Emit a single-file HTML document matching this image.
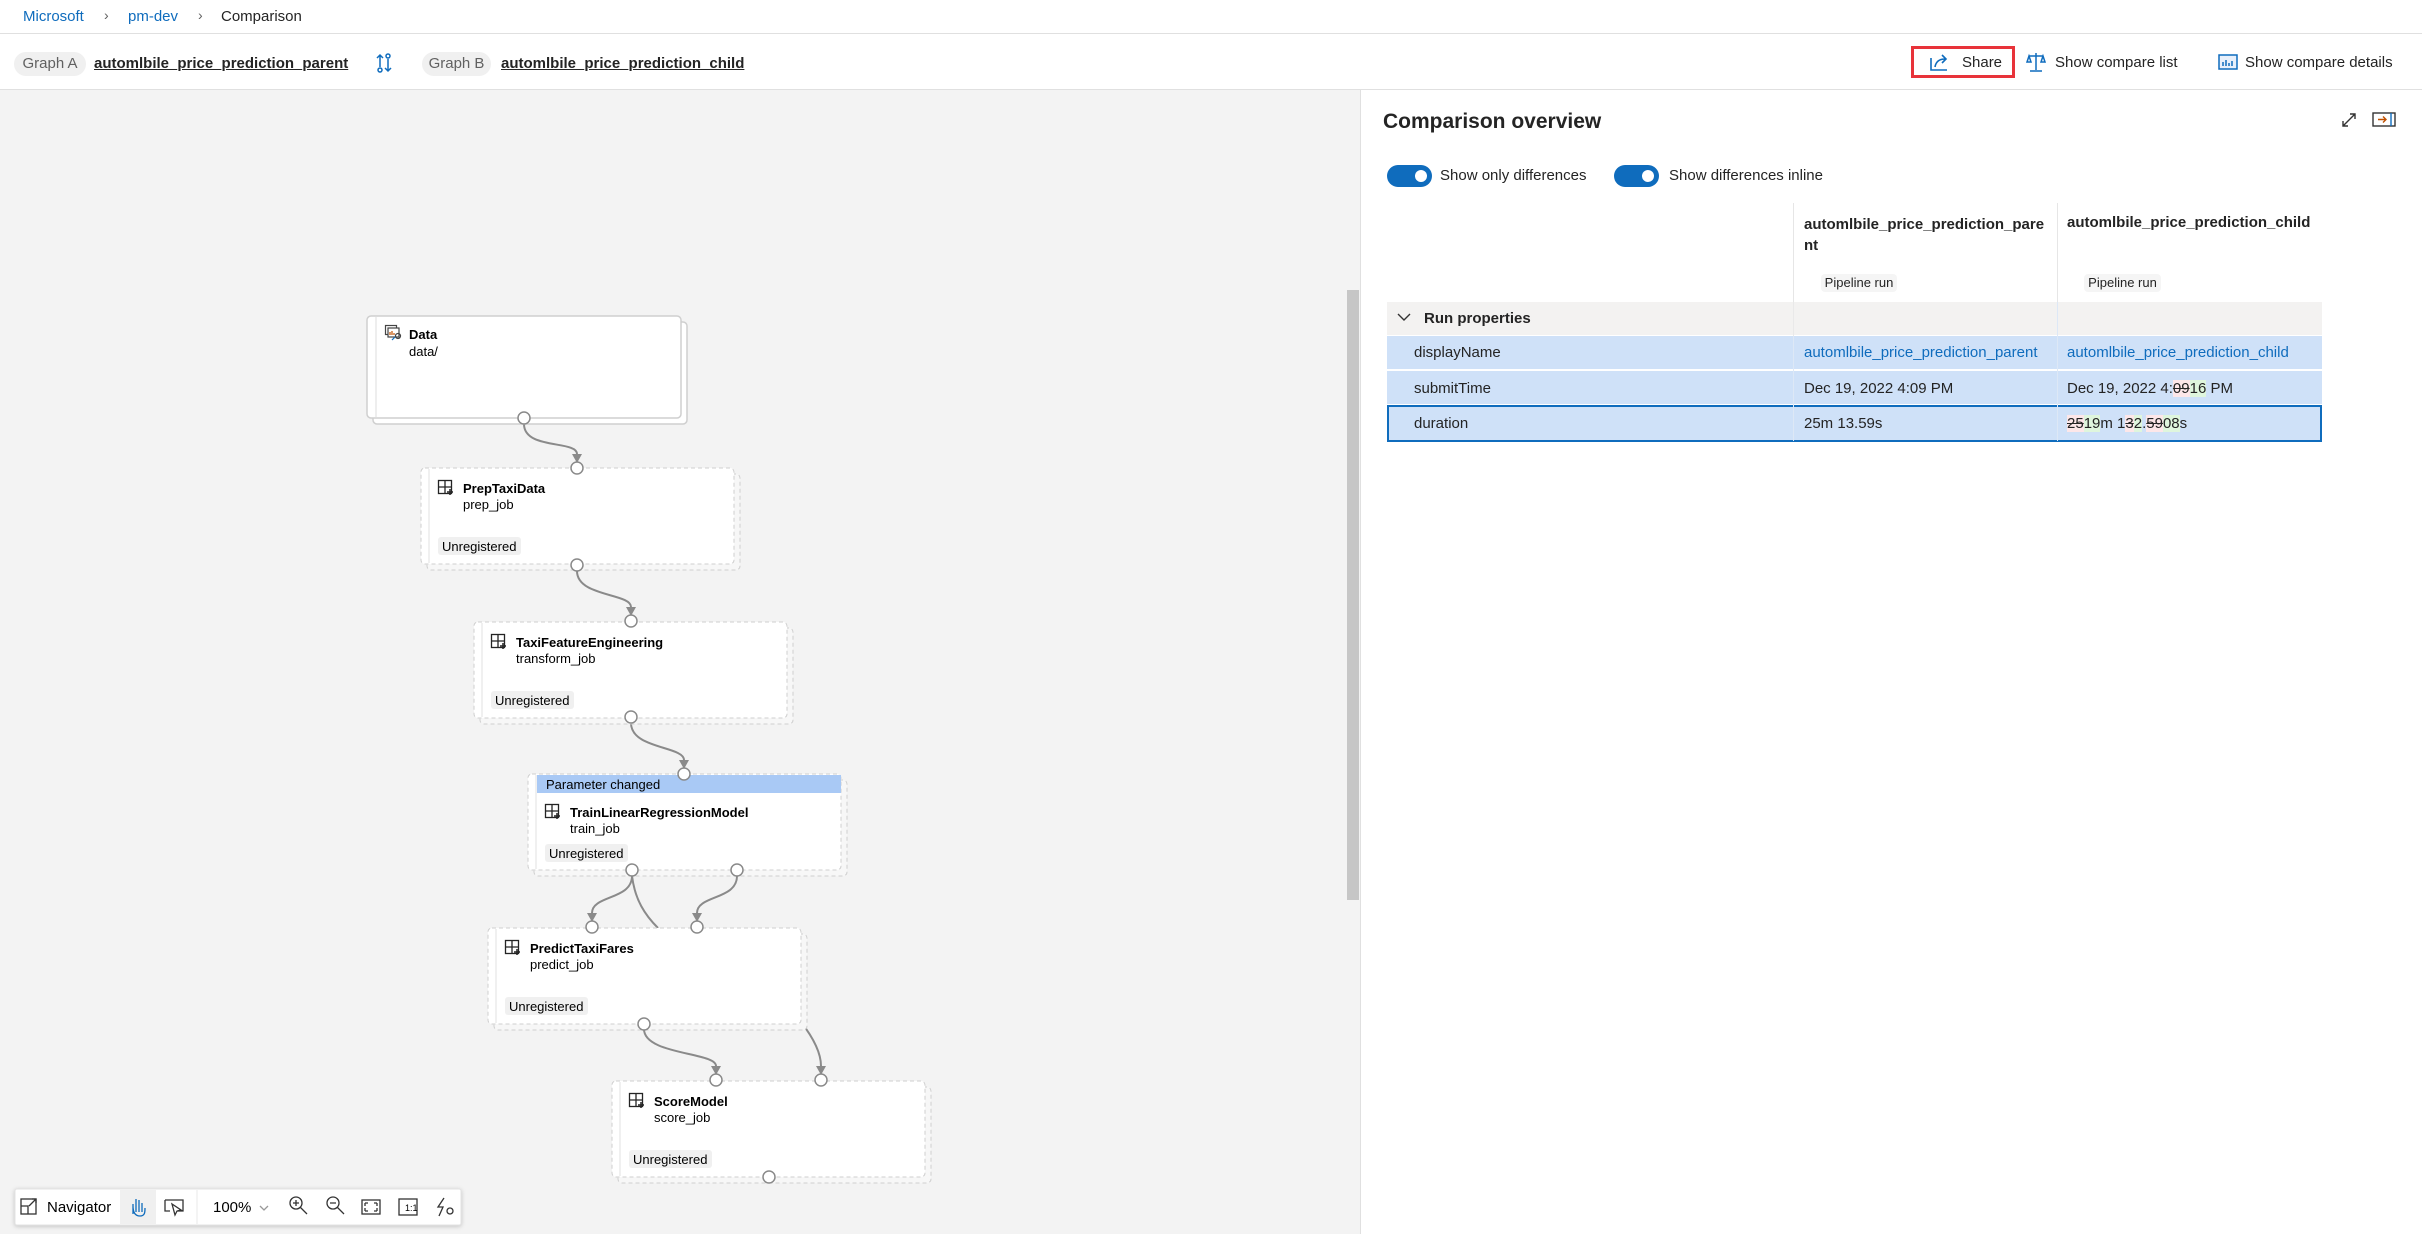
<!DOCTYPE html>
<html><head><meta charset="utf-8"><style>
*{box-sizing:border-box;margin:0;padding:0}
body{width:2422px;height:1234px;overflow:hidden;background:#fff;font-family:"Liberation Sans",sans-serif;color:#242424;position:relative}
.a{position:absolute;white-space:nowrap}
.pill{position:absolute;background:#f0f0f0;border-radius:12px;color:#616161;font-size:15px;height:24px;line-height:24px;text-align:center}
.gl{font-weight:bold;font-size:15px;text-decoration:underline;top:55px}
.bt{font-size:15px;top:54px}
.row{position:absolute;left:1387px;width:935px;background:#cfe1f8}
.cell{position:absolute;font-size:15px;white-space:nowrap}
.del{background:#fde7e9;text-decoration:line-through}
.ins{background:#dff6dd}
.lnk{color:#0f6cbd}
.tg{position:absolute;width:45px;height:22px;border-radius:11px;background:#0f6cbd}
.tg:after{content:"";position:absolute;right:5px;top:5px;width:12px;height:12px;border-radius:50%;background:#fff}
</style></head><body>
<div class="a" style="left:23px;top:8px;font-size:15px;color:#0f6cbd">Microsoft</div>
<div class="a" style="left:104px;top:7px;font-size:14px;color:#616161">&#x203A;</div>
<div class="a" style="left:128px;top:8px;font-size:15px;color:#0f6cbd">pm-dev</div>
<div class="a" style="left:198px;top:7px;font-size:14px;color:#616161">&#x203A;</div>
<div class="a" style="left:221px;top:8px;font-size:15px">Comparison</div>
<div class="a" style="left:0;top:33px;width:2422px;height:1px;background:#e0e0e0"></div>
<div class="pill" style="left:14px;top:52px;width:72px">Graph A</div>
<div class="a gl" style="left:94px">automlbile_price_prediction_parent</div>
<svg class="a" style="left:375px;top:53px" width="18" height="20" viewBox="0 0 18 20" fill="none" stroke="#0f6cbd" stroke-width="1.5"><path d="M5 2v12M2 5l3-3 3 3M13 18V6M10 15l3 3 3-3"/><circle cx="5" cy="17" r="2"/><circle cx="13" cy="3" r="2"/></svg>
<div class="pill" style="left:422px;top:52px;width:69px">Graph B</div>
<div class="a gl" style="left:501px">automlbile_price_prediction_child</div>
<div class="a" style="left:1911px;top:46px;width:104px;height:32px;border:3px solid #e8333a"></div>
<svg class="a" style="left:1929px;top:52px" width="22" height="20" viewBox="0 0 22 20" fill="none" stroke="#0f6cbd" stroke-width="1.6"><path d="M2 6v12h16M6 15c1-6 5-8 10-8M13 3l4 4-4 4"/></svg>
<div class="a bt" style="left:1962px">Share</div>
<svg class="a" style="left:2026px;top:51px" width="20" height="22" viewBox="0 0 20 22" fill="none" stroke="#0f6cbd" stroke-width="1.5"><path d="M10 2v17M4 20h12M3 5h14M3 5l-2 6h4zM17 5l-2 6h4z"/></svg>
<div class="a bt" style="left:2055px">Show compare list</div>
<svg class="a" style="left:2218px;top:54px" width="20" height="16" viewBox="0 0 20 16"><rect x="1" y="1" width="18" height="14" fill="#e8f0fb" stroke="#0f6cbd" stroke-width="1.5"/><path d="M5 12V8M8 12V6M11 12V9M14 12V7" stroke="#0f6cbd" stroke-width="1.5"/></svg>
<div class="a bt" style="left:2245px">Show compare details</div>
<div class="a" style="left:0;top:89px;width:2422px;height:1px;background:#e0e0e0"></div>
<div class="a" style="left:0;top:90px;width:1360px;height:1144px;background:#f3f3f3"></div>
<div class="a" style="left:1347px;top:290px;width:12px;height:610px;background:#c6c6c6"></div>
<div class="a" style="left:1360px;top:90px;width:1px;height:1144px;background:#e0e0e0"></div>
<svg class="a" style="left:0;top:0" width="1360" height="1234" font-family="Liberation Sans, sans-serif">
<defs>
<g id="ic" fill="none" stroke="#242424" stroke-width="1.3"><rect x="0.5" y="0.5" width="13" height="13"/><path d="M7 0.5v13M0.5 7h13"/><path d="M12 9v6M9 12h6" stroke-width="1.5"/></g>
</defs>
<g fill="none" stroke="#8a8a8a" stroke-width="2">
<path d="M524 424C524 450 577 440 577 454"/>
<path d="M577 571C577 597 631 593 631 607"/>
<path d="M631 723C631 749 684 746 684 760"/>
<path d="M632 876C632 900 592 895 592 913"/>
<path d="M737 876C737 900 697 895 697 913"/>
<path d="M632 876C635 900 645 915 658 928"/>
<path d="M644 1029C644 1055 716 1052 716 1066"/>
<path d="M801 1022C815 1040 821 1055 821 1066"/>
</g>
<g fill="#8a8a8a">
<path d="M572 454h10l-5 9z"/><path d="M626 607h10l-5 9z"/><path d="M679 760h10l-5 9z"/><path d="M587 913h10l-5 9z"/><path d="M692 913h10l-5 9z"/><path d="M711 1066h10l-5 9z"/><path d="M816 1066h10l-5 9z"/>
</g>
<rect x="373" y="322" width="314" height="102" rx="4" fill="#fff" stroke="#cfcfcf" stroke-width="1.5"/>
<rect x="367" y="316" width="314" height="102" rx="4" fill="#fff" stroke="#cfcfcf" stroke-width="1.5"/>
<line x1="376" y1="317" x2="376" y2="417" stroke="#dcdcdc"/>
<g transform="translate(385,325)" fill="none" stroke-width="1.2"><rect x="0.5" y="0.5" width="11" height="9" stroke="#444"/><rect x="3" y="3" width="11" height="9" fill="#fff" stroke="#444"/><path d="M5 10V7M7 10V6M9 10V8" stroke="#c05000"/><circle cx="13" cy="11" r="2.5" stroke="#444"/><path d="M7 15l3-3" stroke="#0f6cbd"/></g>
<text x="409" y="339" font-size="13" font-weight="bold">Data</text>
<text x="409" y="356" font-size="13">data/</text>
<g font-size="13">
<g transform="translate(421,468)">
<rect x="6" y="6" width="313" height="96" rx="4" fill="#f7f7f7" stroke="#cfcfcf" stroke-dasharray="4 3"/>
<rect x="0" y="0" width="313" height="96" rx="4" fill="#fff" stroke="#cfcfcf" stroke-dasharray="4 3"/>
<line x1="8" y1="1" x2="8" y2="95" stroke="#e2e2e2"/>
<use href="#ic" x="17" y="12"/>
<text x="42" y="25" font-weight="bold">PrepTaxiData</text><text x="42" y="41">prep_job</text>
<rect x="17" y="69" width="83" height="18" rx="3" fill="#f0f0f0"/><text x="21" y="83">Unregistered</text>
</g>
<g transform="translate(474,622)">
<rect x="6" y="6" width="313" height="96" rx="4" fill="#f7f7f7" stroke="#cfcfcf" stroke-dasharray="4 3"/>
<rect x="0" y="0" width="313" height="96" rx="4" fill="#fff" stroke="#cfcfcf" stroke-dasharray="4 3"/>
<line x1="8" y1="1" x2="8" y2="95" stroke="#e2e2e2"/>
<use href="#ic" x="17" y="12"/>
<text x="42" y="25" font-weight="bold">TaxiFeatureEngineering</text><text x="42" y="41">transform_job</text>
<rect x="17" y="69" width="83" height="18" rx="3" fill="#f0f0f0"/><text x="21" y="83">Unregistered</text>
</g>
<g transform="translate(528,774)">
<rect x="6" y="6" width="313" height="96" rx="4" fill="#f7f7f7" stroke="#cfcfcf" stroke-dasharray="4 3"/>
<rect x="0" y="0" width="313" height="96" rx="4" fill="#fff" stroke="#cfcfcf" stroke-dasharray="4 3"/>
<rect x="9" y="1" width="304" height="18" fill="#a9c9f5"/>
<line x1="8" y1="1" x2="8" y2="95" stroke="#e2e2e2"/>
<text x="18" y="15">Parameter changed</text>
<use href="#ic" x="17" y="30"/>
<text x="42" y="43" font-weight="bold">TrainLinearRegressionModel</text><text x="42" y="59">train_job</text>
<rect x="17" y="70" width="83" height="18" rx="3" fill="#f0f0f0"/><text x="21" y="84">Unregistered</text>
</g>
<g transform="translate(488,928)">
<rect x="6" y="6" width="313" height="96" rx="4" fill="#f7f7f7" stroke="#cfcfcf" stroke-dasharray="4 3"/>
<rect x="0" y="0" width="313" height="96" rx="4" fill="#fff" stroke="#cfcfcf" stroke-dasharray="4 3"/>
<line x1="8" y1="1" x2="8" y2="95" stroke="#e2e2e2"/>
<use href="#ic" x="17" y="12"/>
<text x="42" y="25" font-weight="bold">PredictTaxiFares</text><text x="42" y="41">predict_job</text>
<rect x="17" y="69" width="83" height="18" rx="3" fill="#f0f0f0"/><text x="21" y="83">Unregistered</text>
</g>
<g transform="translate(612,1081)">
<rect x="6" y="6" width="313" height="96" rx="4" fill="#f7f7f7" stroke="#cfcfcf" stroke-dasharray="4 3"/>
<rect x="0" y="0" width="313" height="96" rx="4" fill="#fff" stroke="#cfcfcf" stroke-dasharray="4 3"/>
<line x1="8" y1="1" x2="8" y2="95" stroke="#e2e2e2"/>
<use href="#ic" x="17" y="12"/>
<text x="42" y="25" font-weight="bold">ScoreModel</text><text x="42" y="41">score_job</text>
<rect x="17" y="69" width="83" height="18" rx="3" fill="#f0f0f0"/><text x="21" y="83">Unregistered</text>
</g>
</g>
<g fill="#fff" stroke="#8a8a8a" stroke-width="1.5">
<circle cx="524" cy="418" r="6"/><circle cx="577" cy="468" r="6"/><circle cx="577" cy="565" r="6"/><circle cx="631" cy="621" r="6"/><circle cx="631" cy="717" r="6"/><circle cx="684" cy="774" r="6"/><circle cx="632" cy="870" r="6"/><circle cx="737" cy="870" r="6"/><circle cx="592" cy="927" r="6"/><circle cx="697" cy="927" r="6"/><circle cx="644" cy="1024" r="6"/><circle cx="716" cy="1080" r="6"/><circle cx="821" cy="1080" r="6"/><circle cx="769" cy="1177" r="6"/>
</g>
<rect x="15" y="1189" width="446" height="36" rx="2" fill="#fff" stroke="#e3e3e3" style="filter:drop-shadow(0 1px 2px rgba(0,0,0,.2))"/>
<rect x="120" y="1190" width="36" height="34" fill="#f0f0f0"/>
<line x1="197" y1="1190" x2="197" y2="1224" stroke="#e8e8e8"/>
<g fill="none" stroke="#333" stroke-width="1.3">
<rect x="21" y="1199" width="15" height="15"/><path d="M21 1206h7v8M29 1206l7-7M32 1199h4v4"/>
<path d="M165 1200h18v11h-6M165 1200v11h5M172 1204l3 11 2-4 4-1z"/>
<path d="M260 1206l4 4 4-4" stroke="#999"/>
<circle cx="296" cy="1203" r="6"/><path d="M300 1207l7 7M293 1203h6M296 1200v6"/>
<circle cx="333" cy="1203" r="6"/><path d="M337 1207l7 7M330 1203h6"/>
<rect x="362" y="1200" width="18" height="14"/><path d="M365 1203h3M365 1203v3M377 1211h-3M377 1211v-3M377 1203h-3M377 1203v3M365 1211h3M365 1211v-3"/>
<rect x="399" y="1199" width="18" height="16"/>
<path d="M444 1198l-6 9h5l-4 9"/><circle cx="450" cy="1211" r="3"/>
</g>
<path d="M133 1214v-10M136 1212v-13M139 1212v-12M142 1212v-9M133 1206c0 6 2 10 7 10s5-4 5-8" fill="none" stroke="#0f6cbd" stroke-width="1.3"/>
<text x="405" y="1211" font-size="9">1:1</text>
<text x="47" y="1212" font-size="15">Navigator</text>
<text x="213" y="1212" font-size="15">100%</text>
</svg>
<div class="a" style="left:1383px;top:110px;font-size:21px;font-weight:bold">Comparison overview</div>
<svg class="a" style="left:2340px;top:111px" width="60" height="18" viewBox="0 0 60 18" fill="none" stroke-width="1.4"><path d="M3 15L15 3M10 3h5v5M3 10v5h5" stroke="#333"/><rect x="33" y="2" width="22" height="13" stroke="#333"/><path d="M51 2v13" stroke="#0f6cbd"/><path d="M38 8.5h8M43 5.5l3 3-3 3" stroke="#c05000"/></svg>
<div class="tg" style="left:1387px;top:165px"></div>
<div class="a" style="left:1440px;top:167px;font-size:15px">Show only differences</div>
<div class="tg" style="left:1614px;top:165px"></div>
<div class="a" style="left:1669px;top:167px;font-size:15px">Show differences inline</div>
<div class="a" style="left:1793px;top:203px;width:1px;height:238px;background:#e6e6e6"></div>
<div class="a" style="left:2057px;top:203px;width:1px;height:238px;background:#e6e6e6"></div>
<div class="cell" style="left:1804px;top:214px;font-weight:bold;line-height:21px">automlbile_price_prediction_pare<br>nt</div>
<div class="cell" style="left:2067px;top:214px;font-weight:bold">automlbile_price_prediction_child</div>
<div class="a" style="left:1821px;top:274px;width:76px;height:18px;background:#f5f5f5;border-radius:4px;font-size:13px;line-height:18px;text-align:center">Pipeline run</div>
<div class="a" style="left:2084px;top:274px;width:77px;height:18px;background:#f5f5f5;border-radius:4px;font-size:13px;line-height:18px;text-align:center">Pipeline run</div>
<div class="row" style="top:302px;height:33px;background:#f3f2f1"></div>
<svg class="a" style="left:1397px;top:312px" width="14" height="10"><path d="M1 2l6 6 6-6" fill="none" stroke="#333" stroke-width="1.4"/></svg>
<div class="cell" style="left:1424px;top:310px;font-weight:bold;font-size:15px">Run properties</div>
<div class="a" style="left:1793px;top:302px;width:1px;height:139px;background:#e9e9e9"></div>
<div class="row" style="top:336px;height:33px"></div>
<div class="row" style="top:371px;height:33px"></div>
<div class="row" style="top:405px;height:37px;border:2px solid #0f6cbd"></div>
<div class="a" style="left:1793px;top:336px;width:1px;height:105px;background:#dde8f6"></div>
<div class="a" style="left:2057px;top:302px;width:1px;height:139px;background:#dde8f6"></div>
<div class="cell" style="left:1414px;top:344px">displayName</div>
<div class="cell lnk" style="left:1804px;top:344px">automlbile_price_prediction_parent</div>
<div class="cell lnk" style="left:2067px;top:344px">automlbile_price_prediction_child</div>
<div class="cell" style="left:1414px;top:380px">submitTime</div>
<div class="cell" style="left:1804px;top:380px">Dec 19, 2022 4:09 PM</div>
<div class="cell" style="left:2067px;top:380px">Dec 19, 2022 4:<span class="del">09</span><span class="ins">16</span> PM</div>
<div class="cell" style="left:1414px;top:415px">duration</div>
<div class="cell" style="left:1804px;top:415px">25m 13.59s</div>
<div class="cell" style="left:2067px;top:415px"><span class="del">25</span><span class="ins">19</span>m 1<span class="del">3</span><span class="ins">2</span>.<span class="del">59</span><span class="ins">08</span>s</div>
</body></html>
